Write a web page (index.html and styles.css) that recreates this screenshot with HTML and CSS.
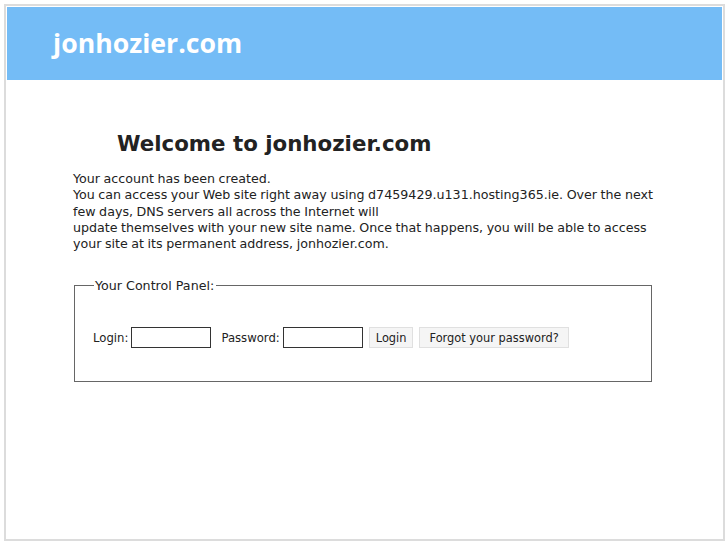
FILE: index.html
```html
<!DOCTYPE html>
<html>
<head>
<meta charset="utf-8">
<link rel="stylesheet" href="styles.css">
</head>
<body>
<div class="page">
  <div class="header"><span class="brand">jonhozier.com</span></div>
  <div class="content">
    <h1 class="title">Welcome to jonhozier.com</h1>
    <p class="intro">Your account has been created.<br>You can access your Web site right away using d7459429.u131.hosting365.ie. Over the next few days, DNS servers all across the Internet will<br>update themselves with your new site name. Once that happens, you will be able to access your site at its permanent address, jonhozier.com.</p>
    <fieldset class="panel">
      <legend class="legend">Your Control Panel:</legend>
      <form class="login-row">
        <label class="lbl">Login:</label><input class="field" type="text">
        <label class="lbl lbl-pass">Password:</label><input class="field" type="password">
        <button class="btn btn-login" type="button">Login</button>
        <button class="btn btn-forgot" type="button">Forgot your password?</button>
      </form>
    </fieldset>
  </div>
</div>
</body>
</html>
```
FILE: styles.css
```css
html, body { margin: 0; padding: 0; background: #fff; }
body { font-family: "DejaVu Sans", sans-serif; color: #222; }
.page {
  margin: 4px 2px 4px 4px;
  border: 2px solid #dcdcdc;
  height: 537px;
  box-sizing: border-box;
}
.header {
  background: #74bcf6;
  height: 73px;
  margin: 1px 1px 0 1px;
  display: flex;
  align-items: center;
  padding-left: 46px;
  box-sizing: border-box;
}
.brand {
  font-family: "Open Sans", sans-serif;
  font-weight: 700;
  font-size: 26.67px;
  color: #fff;
  margin-top: -3px;
}
.content { padding: 0 0 0 67px; }
.title {
  font-size: 21.33px;
  font-weight: bold;
  margin: 50px 0 0 44px;
  line-height: 28px;
}
.intro {
  font-size: 12.67px;
  line-height: 16.25px;
  word-spacing: -0.5px;
  margin: 13px 0 0 0;
  width: 590px;
}
.panel {
  margin: 26px 0 0 1px;
  width: 578px;
  height: 104px;
  box-sizing: border-box;
  border: 1px solid #666;
  padding: 0 0 0 18px;
}
.legend { font-size: 12.67px; padding: 0 2px 0 1px; margin-left: 1px; }
.login-row {
  display: flex;
  align-items: center;
  margin-top: 34px;
  font-size: 11.67px;
}
.lbl { margin-right: 3px; }
.lbl-pass { margin-left: 10px; }
.field {
  width: 80px;
  height: 21px;
  box-sizing: border-box;
  border: 1px solid #333;
  padding: 0;
  margin: 0;
}
.btn {
  font-family: "DejaVu Sans", sans-serif;
  font-size: 11.4px;
  color: #222;
  background: #f5f5f5;
  border: 1px solid #e0e0e0;
  height: 21px;
  margin-left: 6px;
}
.btn-login { padding: 0 6px; }
.btn-forgot { padding: 0 9px; }
```
